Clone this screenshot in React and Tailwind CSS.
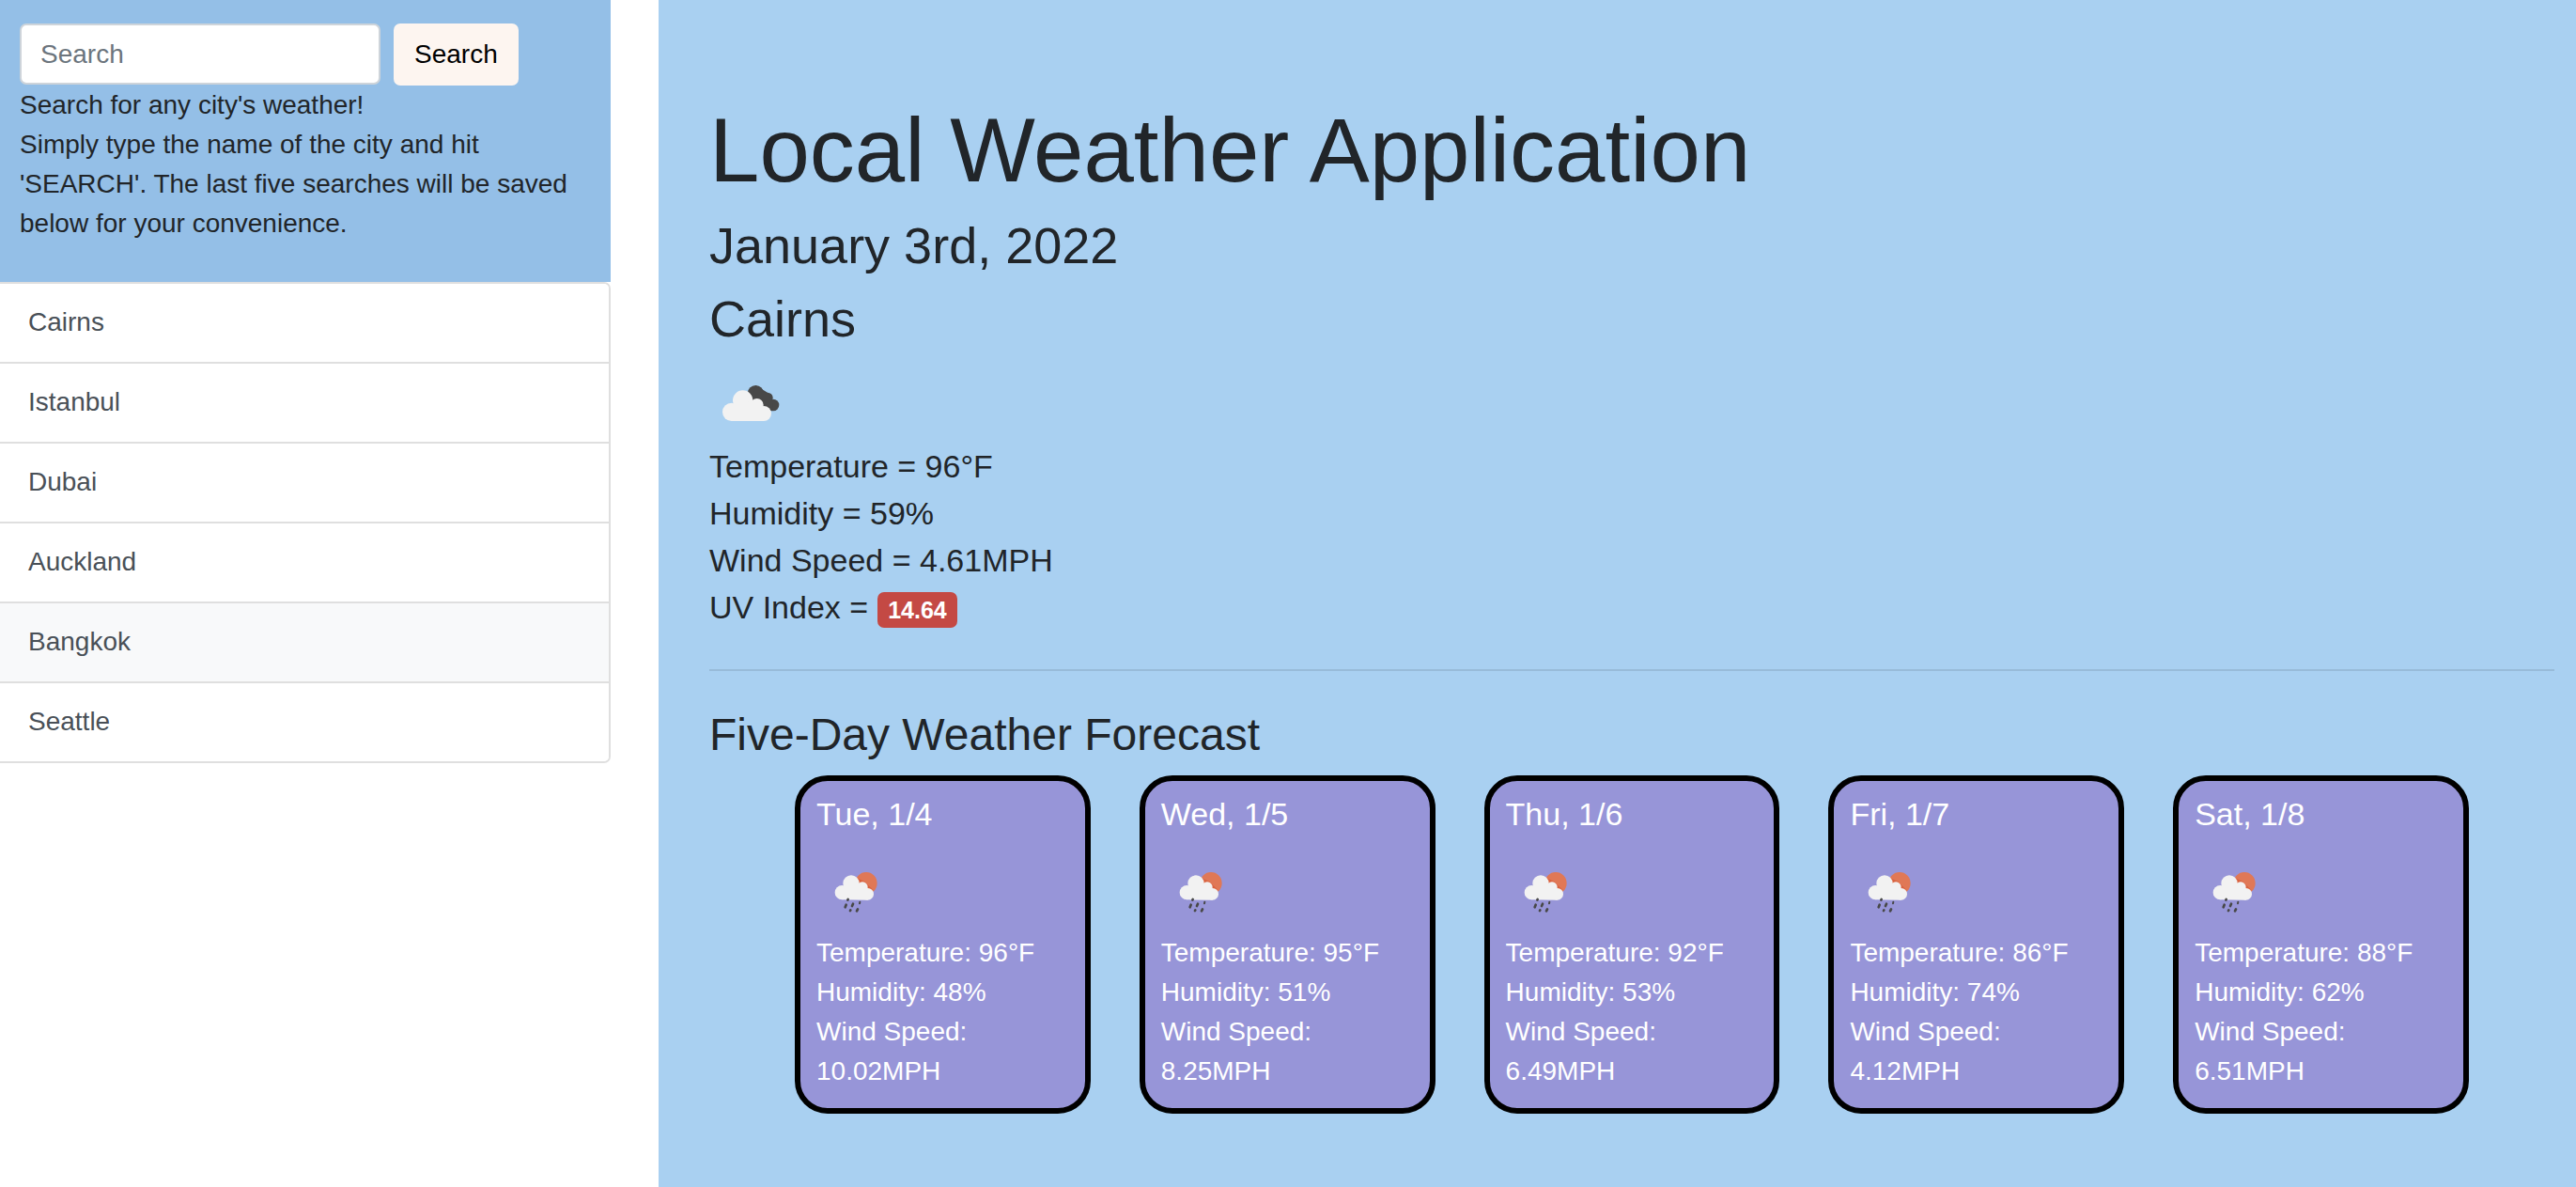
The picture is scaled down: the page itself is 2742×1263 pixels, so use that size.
const cities = ["Cairns", "Istanbul", "Dubai", "Auckland", "Bangkok", "Seattle"];

const forecast = [
  { day: "Tue, 1/4", temp: 96, humidity: 48, wind: "10.02" },
  { day: "Wed, 1/5", temp: 95, humidity: 51, wind: "8.25" },
  { day: "Thu, 1/6", temp: 92, humidity: 53, wind: "6.49" },
  { day: "Fri, 1/7", temp: 86, humidity: 74, wind: "4.12" },
  { day: "Sat, 1/8", temp: 88, humidity: 62, wind: "6.51" },
];

function BrokenClouds() {
  return (
    <svg viewBox="-15 -38 264 264" className="size-[88px]" role="img" aria-label="Broken clouds">
      <g fill="#484848">
        <circle cx="133" cy="69" r="26" />
        <circle cx="171" cy="83" r="17" />
        <circle cx="189" cy="106" r="19" />
        <path d="M133 43 L171 66 L189 100 L186 125 L150 118 L120 80 Z" />
      </g>
      <g fill="#f2f2f2">
        <circle cx="92" cy="91" r="32" />
        <circle cx="56" cy="128" r="29" />
        <circle cx="137" cy="106" r="21" />
        <circle cx="159" cy="133" r="24" />
        <path d="M56 128 L80 90 L137 100 L159 125 L160 157 L56 157 Z" />
      </g>
    </svg>
  );
}

function SunRain() {
  return (
    <svg viewBox="-2 -9 264 264" className="size-[88px]" role="img" aria-label="Rain with sun">
      <circle cx="157" cy="95" r="35" fill="#e07856" />
      <path d="M125 78 L152 90 L180 118 L150 120 Z" fill="#d9623f" />
      <g fill="#f2f2f2">
        <circle cx="109" cy="96" r="26" />
        <circle cx="80" cy="125" r="23" />
        <circle cx="145" cy="108" r="17" />
        <circle cx="162" cy="130" r="19" />
        <path d="M80 125 L100 95 L145 104 L162 125 L162 149 L80 148 Z" />
      </g>
      <g stroke="#484848" strokeWidth="8" strokeLinecap="round">
        <path d="M99 147 L98 149" />
        <path d="M93 164 L90 172" />
        <path d="M115 161 L112 168" />
        <path d="M107 181 L106 183" />
        <path d="M130 178 L127 184" />
        <path d="M137 155 L136 160" strokeWidth="6" />
      </g>
    </svg>
  );
}

function Sidebar() {
  return (
    <aside>
      <div className="bg-[#94bfe7] px-[21px] pt-[25px] pb-[41px]">
        <form className="flex items-start gap-[14px]" onSubmit={(e) => e.preventDefault()}>
          <input
            type="search"
            aria-label="Search"
            placeholder="Search"
            className="h-[65px] w-[384px] rounded-[7px] border-2 border-[#ced4da] bg-white px-5 placeholder:text-[#6c757d]"
          />
          <button type="submit" className="h-[66px] rounded-[7px] bg-[#fdf5f0] px-[22px] text-black">
            Search
          </button>
        </form>
        <p>Search for any city's weather!</p>
        <p>
          Simply type the name of the city and hit 'SEARCH'. The last five searches will be saved below for your
          convenience.
        </p>
      </div>
      <ul className="overflow-hidden rounded-r-[7px] border-y-2 border-r-2 border-[#dfdfdf] divide-y-2 divide-[#dfdfdf]">
        {cities.map((city) => (
          <li key={city}>
            <button
              type="button"
              className={`block w-full px-[30px] pt-5 pb-[21px] text-left text-[#495057] ${
                city === "Bangkok" ? "bg-[#f8f9fa]" : "bg-white"
              }`}
            >
              {city}
            </button>
          </li>
        ))}
      </ul>
    </aside>
  );
}

function ForecastCard({ day, temp, humidity, wind }) {
  return (
    <article className="rounded-[35px] border-6 border-black bg-[#9795d8] px-[17px] pt-[14px] pb-[18px] text-white">
      <h4 className="mb-[18px] text-[34px] leading-[42px]">{day}</h4>
      <SunRain />
      <p>Temperature: {temp}°F</p>
      <p>Humidity: {humidity}%</p>
      <p>
        Wind Speed: <span className="inline-block">{wind}MPH</span>
      </p>
    </article>
  );
}

export default function App() {
  return (
    <div className="grid min-h-screen grid-cols-[650fr_2041fr] gap-[51px] bg-white font-['Liberation_Sans',Arial,sans-serif] text-[28px] leading-[42px] text-[#212529] [&_svg]:block">
      <Sidebar />
      <main className="bg-[#a9d0f1] pt-[101px] pr-[23px] pb-[78px] pl-[54px]">
        <h1 className="mb-[10px] text-[96px] leading-[118px]">Local Weather Application</h1>
        <h2 className="mb-[14px] text-[54px] leading-[64px]">January 3rd, 2022</h2>
        <h2 className="mb-[12px] text-[54px] leading-[64px]">Cairns</h2>
        <BrokenClouds />
        <div className="text-[34px] leading-[50px]">
          <p>Temperature = 96°F</p>
          <p>Humidity = 59%</p>
          <p>Wind Speed = 4.61MPH</p>
          <p className="flex items-baseline gap-[10px]">
            UV Index =
            <span className="rounded-[7px] bg-[#c44944] px-[11px] text-[25px] leading-[38px] font-bold text-white">
              14.64
            </span>
          </p>
        </div>
        <hr className="mt-[41px] mb-[39px] border-t-2 border-[#98bbd9]" />
        <h3 className="mb-[14px] text-[48px] leading-[58px]">Five-Day Weather Forecast</h3>
        <section className="grid grid-cols-5 gap-[52px] px-[91px]">
          {forecast.map((item) => (
            <ForecastCard key={item.day} {...item} />
          ))}
        </section>
      </main>
    </div>
  );
}
